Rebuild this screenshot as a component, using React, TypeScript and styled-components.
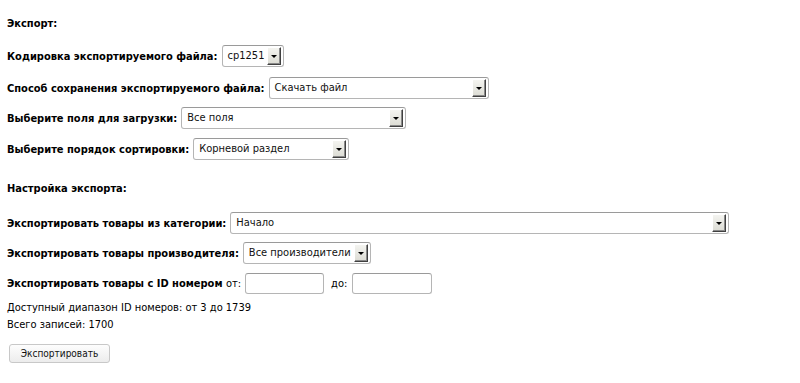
import React from "react";
import styled, { createGlobalStyle } from "styled-components";

const GlobalStyle = createGlobalStyle`
  html, body {
    margin: 0;
    padding: 0;
    background: #fff;
  }
  body {
    font-family: "DejaVu Sans Condensed", "DejaVu Sans", Verdana, sans-serif;
    font-size: 11px;
    color: #000;
  }
`;

const Page = styled.div`
  padding: 17px 7px 20px 7px;
`;

const Heading = styled.div<{ $top?: number; $bottom?: number }>`
  font-weight: bold;
  height: 14px;
  line-height: 14px;
  margin-top: ${(p) => p.$top ?? 0}px;
  margin-bottom: ${(p) => p.$bottom ?? 14}px;
`;

const Row = styled.div<{ $gap?: number }>`
  display: flex;
  align-items: center;
  height: 22px;
  margin-bottom: ${(p) => p.$gap ?? 8}px;
  white-space: nowrap;
`;

const Label = styled.span`
  font-weight: bold;
  margin-right: 4px;
`;

const Plain = styled.span`
  font-weight: normal;
`;

const SelectBox = styled.div<{ $width: number }>`
  display: flex;
  align-items: stretch;
  box-sizing: border-box;
  width: ${(p) => p.$width}px;
  height: 22px;
  border: 1px solid #b5b5b5;
  border-top-color: #9a9a9a;
  border-radius: 3px;
  background: #fff;
  padding: 1px 2px 1px 0;
`;

const SelectValue = styled.span`
  flex: 1;
  padding-left: 5px;
  font-size: 11px;
  line-height: 18px;
  color: #111;
  overflow: hidden;
`;

const ArrowButton = styled.span`
  box-sizing: border-box;
  width: 14px;
  display: flex;
  align-items: center;
  justify-content: center;
  background: linear-gradient(#f4f4f0, #dcdcd4);
  border: 1px solid;
  border-color: #fff #404040 #404040 #fff;
  box-shadow: inset -1px -1px 0 #8a8a8a;
  &::after {
    content: "";
    border-left: 3px solid transparent;
    border-right: 3px solid transparent;
    border-top: 3px solid #000;
    margin-top: 1px;
  }
`;

const TextInput = styled.input<{ $width: number; $left?: number }>`
  box-sizing: border-box;
  width: ${(p) => p.$width}px;
  height: 21px;
  border: 1px solid #b5b5b5;
  border-top-color: #9a9a9a;
  border-radius: 3px;
  margin: 0 7px 0 ${(p) => p.$left ?? 0}px;
  padding: 0 4px;
  font: inherit;
`;

const Note = styled.div`
  line-height: 17px;
`;

const Notes = styled.div`
  margin-top: -3px;
`;

const ExportButton = styled.button`
  margin: 11px 0 0 2px;
  width: 101px;
  height: 19px;
  border: 1px solid #c8c8c8;
  border-radius: 3px;
  background: linear-gradient(#fdfdfd, #ececec);
  font-family: inherit;
  font-size: 10px;
  color: #111;
  padding: 0;
`;

const Select: React.FC<{ value: string; width: number }> = ({ value, width }) => (
  <SelectBox $width={width}>
    <SelectValue>{value}</SelectValue>
    <ArrowButton />
  </SelectBox>
);

export default function App() {
  return (
    <Page>
      <GlobalStyle />
      <Heading>Экспорт:</Heading>
      <Row $gap={10}>
        <Label>Кодировка экспортируемого файла:</Label>
        <Select value="cp1251" width={62} />
      </Row>
      <Row $gap={8}>
        <Label>Способ сохранения экспортируемого файла:</Label>
        <Select value="Скачать файл" width={220} />
      </Row>
      <Row $gap={9}>
        <Label>Выберите поля для загрузки:</Label>
        <Select value="Все поля" width={225} />
      </Row>
      <Row>
        <Label>Выберите порядок сортировки:</Label>
        <Select value="Корневой раздел" width={156} />
      </Row>
      <Heading $top={22} $bottom={16}>
        Настройка экспорта:
      </Heading>
      <Row>
        <Label>Экспортировать товары из категории:</Label>
        <Select value="Начало" width={499} />
      </Row>
      <Row>
        <Label>Экспортировать товары производителя:</Label>
        <Select value="Все производители" width={128} />
      </Row>
      <Row>
        <Label>
          Экспортировать товары с ID номером <Plain>от:</Plain>
        </Label>
        <TextInput $width={79} />
        <Plain>до:</Plain>
        <TextInput $width={80} $left={5} />
      </Row>
      <Notes>
        <Note>Доступный диапазон ID номеров: от 3 до 1739</Note>
        <Note>Всего записей: 1700</Note>
      </Notes>
      <ExportButton>Экспортировать</ExportButton>
    </Page>
  );
}
